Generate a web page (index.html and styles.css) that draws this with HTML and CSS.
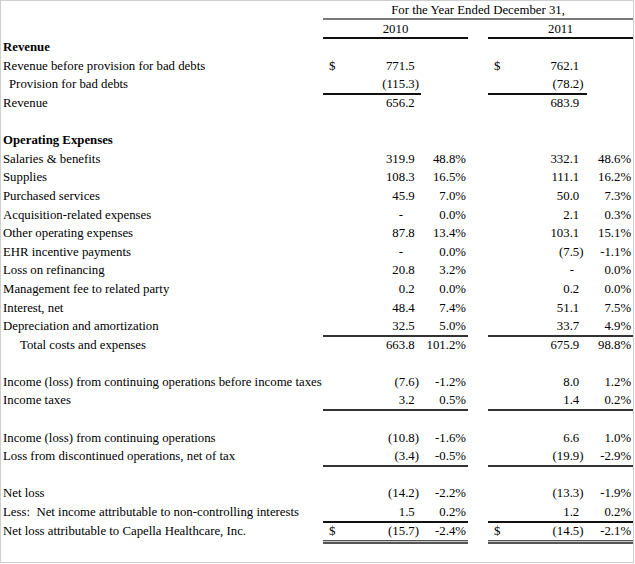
FILE: index.html
```html
<!DOCTYPE html>
<html>
<head>
<meta charset="utf-8">
<link rel="stylesheet" href="styles.css">
</head>
<body>
<div class="sheet">
<table class="stmt">
<colgroup>
<col class="c-label"><col class="c-cur"><col class="c-num"><col class="c-pct"><col class="c-gap"><col class="c-cur"><col class="c-num2"><col class="c-pct2">
</colgroup>
<tbody>
<tr><td></td><td colspan="7" class="hdr top">For the Year Ended December 31,</td></tr>
<tr><td></td><td colspan="3" class="hdr ul k">2010</td><td></td><td colspan="3" class="hdr ul k">2011</td></tr>
<tr><td class="lbl b">Revenue</td><td colspan="7"></td></tr>
<tr><td class="lbl">Revenue before provision for bad debts</td><td class="cur">$</td><td class="num">771.5</td><td></td><td></td><td class="cur">$</td><td class="num2">762.1</td><td></td></tr>
<tr><td class="lbl in1">Provision for bad debts</td><td class="cur ul k"></td><td class="num neg ul k">(115.3)</td><td></td><td></td><td class="cur ul k"></td><td class="num2 neg ul k">(78.2)</td><td></td></tr>
<tr><td class="lbl">Revenue</td><td></td><td class="num">656.2</td><td></td><td></td><td></td><td class="num2">683.9</td><td></td></tr>
<tr><td class="lbl">&nbsp;</td><td colspan="7"></td></tr>
<tr><td class="lbl b">Operating Expenses</td><td colspan="7"></td></tr>
<tr><td class="lbl">Salaries &amp; benefits</td><td></td><td class="num">319.9</td><td class="pct">48.8%</td><td></td><td></td><td class="num2">332.1</td><td class="pct">48.6%</td></tr>
<tr><td class="lbl">Supplies</td><td></td><td class="num">108.3</td><td class="pct">16.5%</td><td></td><td></td><td class="num2">111.1</td><td class="pct">16.2%</td></tr>
<tr><td class="lbl">Purchased services</td><td></td><td class="num">45.9</td><td class="pct">7.0%</td><td></td><td></td><td class="num2">50.0</td><td class="pct">7.3%</td></tr>
<tr><td class="lbl">Acquisition-related expenses</td><td></td><td class="num dash">-</td><td class="pct">0.0%</td><td></td><td></td><td class="num2">2.1</td><td class="pct">0.3%</td></tr>
<tr><td class="lbl">Other operating expenses</td><td></td><td class="num">87.8</td><td class="pct">13.4%</td><td></td><td></td><td class="num2">103.1</td><td class="pct">15.1%</td></tr>
<tr><td class="lbl">EHR incentive payments</td><td></td><td class="num dash">-</td><td class="pct">0.0%</td><td></td><td></td><td class="num2 neg">(7.5)</td><td class="pct">-1.1%</td></tr>
<tr><td class="lbl">Loss on refinancing</td><td></td><td class="num">20.8</td><td class="pct">3.2%</td><td></td><td></td><td class="num2 dash">-</td><td class="pct">0.0%</td></tr>
<tr><td class="lbl">Management fee to related party</td><td></td><td class="num">0.2</td><td class="pct">0.0%</td><td></td><td></td><td class="num2">0.2</td><td class="pct">0.0%</td></tr>
<tr><td class="lbl">Interest, net</td><td></td><td class="num">48.4</td><td class="pct">7.4%</td><td></td><td></td><td class="num2">51.1</td><td class="pct">7.5%</td></tr>
<tr><td class="lbl">Depreciation and amortization</td><td class="ul"></td><td class="num ul">32.5</td><td class="pct ul">5.0%</td><td></td><td class="ul"></td><td class="num2 ul">33.7</td><td class="pct ul">4.9%</td></tr>
<tr><td class="lbl in2">Total costs and expenses</td><td></td><td class="num">663.8</td><td class="pct">101.2%</td><td></td><td></td><td class="num2">675.9</td><td class="pct">98.8%</td></tr>
<tr><td class="lbl">&nbsp;</td><td colspan="7"></td></tr>
<tr><td class="lbl">Income (loss) from continuing operations before income taxes</td><td></td><td class="num neg">(7.6)</td><td class="pct">-1.2%</td><td></td><td></td><td class="num2">8.0</td><td class="pct">1.2%</td></tr>
<tr><td class="lbl">Income taxes</td><td class="ul"></td><td class="num ul">3.2</td><td class="pct ul">0.5%</td><td></td><td class="ul"></td><td class="num2 ul">1.4</td><td class="pct ul">0.2%</td></tr>
<tr><td class="lbl">&nbsp;</td><td colspan="7"></td></tr>
<tr><td class="lbl">Income (loss) from continuing operations</td><td></td><td class="num neg">(10.8)</td><td class="pct">-1.6%</td><td></td><td></td><td class="num2">6.6</td><td class="pct">1.0%</td></tr>
<tr><td class="lbl">Loss from discontinued operations, net of tax</td><td class="ul"></td><td class="num neg ul">(3.4)</td><td class="pct ul">-0.5%</td><td></td><td class="ul"></td><td class="num2 neg ul">(19.9)</td><td class="pct ul">-2.9%</td></tr>
<tr><td class="lbl">&nbsp;</td><td colspan="7"></td></tr>
<tr><td class="lbl">Net loss</td><td></td><td class="num neg">(14.2)</td><td class="pct">-2.2%</td><td></td><td></td><td class="num2 neg">(13.3)</td><td class="pct">-1.9%</td></tr>
<tr><td class="lbl">Less:&nbsp; Net income attributable to non-controlling interests</td><td class="ul k"></td><td class="num ul k">1.5</td><td class="pct ul k">0.2%</td><td></td><td class="ul k"></td><td class="num2 ul k">1.2</td><td class="pct ul k">0.2%</td></tr>
<tr><td class="lbl">Net loss attributable to Capella Healthcare, Inc.</td><td class="cur dbl">$</td><td class="num neg dbl">(15.7)</td><td class="pct dbl">-2.4%</td><td></td><td class="cur dbl">$</td><td class="num2 neg dbl">(14.5)</td><td class="pct dbl">-2.1%</td></tr>
</tbody>
</table>
</div>
</body>
</html>
```

FILE: styles.css
```css
html, body {
  margin: 0;
  padding: 0;
  background: #fff;
}

.sheet {
  box-sizing: border-box;
  width: 634px;
  height: 563px;
  border: 1px solid #cfcfcf;
  background: #fff;
  overflow: hidden;
}

.stmt {
  table-layout: fixed;
  width: 632px;
  border-collapse: collapse;
  border-spacing: 0;
  font-family: "Liberation Serif", "Times New Roman", serif;
  font-size: 12.8px;
  color: #000;
}

.c-label { width: 322px; }
.c-cur { width: 20px; }
.c-num { width: 78px; }
.c-pct { width: 47px; }
.c-gap { width: 20px; }
.c-num2 { width: 79px; }
.c-pct2 { width: 46px; }

.stmt tr { height: 18.6px; }

.stmt td {
  padding: 0 0 0.6px 0;
  height: 18px;
  line-height: 18px;
  white-space: nowrap;
  overflow: visible;
  vertical-align: middle;
}

.stmt td.lbl { padding-left: 2px; }
.stmt td.in1 { padding-left: 8px; }
.stmt td.in2 { padding-left: 19px; }
.b { font-weight: bold; }

.hdr { text-align: center; }

.stmt td.cur { padding-left: 6px; text-align: left; }

.stmt td.num { text-align: right; padding-right: calc(2px + 0.333em); }
.stmt td.num.neg { padding-right: 2px; }
.stmt td.num.dash { padding-right: 18px; }

.stmt td.num2 { text-align: right; padding-right: calc(3.5px + 0.333em); }
.stmt td.num2.neg { padding-right: 3.5px; }
.stmt td.num2.dash { padding-right: 13px; }

.stmt td.pct { text-align: right; padding-right: 2px; }

.top { box-shadow: inset 0 -2px 0 #7a7a7a; }
.ul { box-shadow: inset 0 -1px 0 #333, 0 1px 0 #333; }
.ul.k { box-shadow: inset 0 -1px 0 #111, 0 1px 0 #111; }
.dbl {
  box-shadow: 0 1px 0 #555, 0 2px 0 #c4c4c4, 0 4px 0 #555;
}
```
